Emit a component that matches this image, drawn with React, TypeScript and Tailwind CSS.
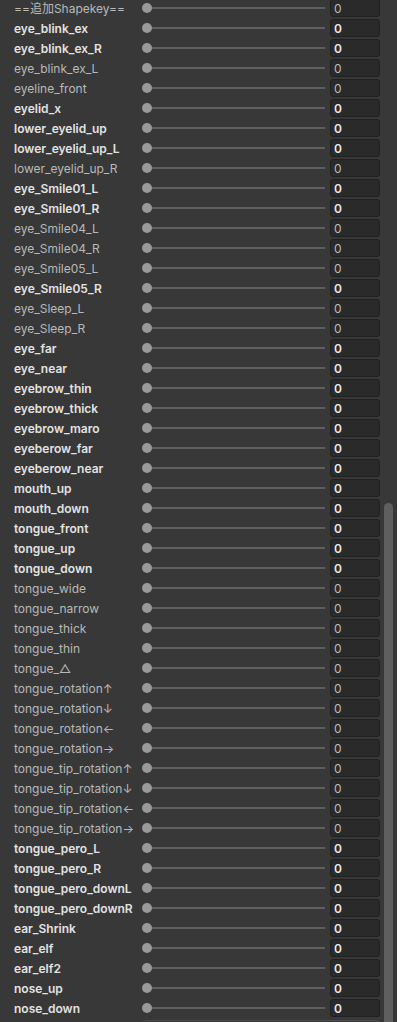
import React from "react";

const rows: [string, boolean][] = [
  ["==追加Shapekey==", false],
  ["eye_blink_ex", true],
  ["eye_blink_ex_R", true],
  ["eye_blink_ex_L", false],
  ["eyeline_front", false],
  ["eyelid_x", true],
  ["lower_eyelid_up", true],
  ["lower_eyelid_up_L", true],
  ["lower_eyelid_up_R", false],
  ["eye_Smile01_L", true],
  ["eye_Smile01_R", true],
  ["eye_Smile04_L", false],
  ["eye_Smile04_R", false],
  ["eye_Smile05_L", false],
  ["eye_Smile05_R", true],
  ["eye_Sleep_L", false],
  ["eye_Sleep_R", false],
  ["eye_far", true],
  ["eye_near", true],
  ["eyebrow_thin", true],
  ["eyebrow_thick", true],
  ["eyebrow_maro", true],
  ["eyeberow_far", true],
  ["eyeberow_near", true],
  ["mouth_up", true],
  ["mouth_down", true],
  ["tongue_front", true],
  ["tongue_up", true],
  ["tongue_down", true],
  ["tongue_wide", false],
  ["tongue_narrow", false],
  ["tongue_thick", false],
  ["tongue_thin", false],
  ["tongue_△", false],
  ["tongue_rotation↑", false],
  ["tongue_rotation↓", false],
  ["tongue_rotation←", false],
  ["tongue_rotation→", false],
  ["tongue_tip_rotation↑", false],
  ["tongue_tip_rotation↓", false],
  ["tongue_tip_rotation←", false],
  ["tongue_tip_rotation→", false],
  ["tongue_pero_L", true],
  ["tongue_pero_R", true],
  ["tongue_pero_downL", true],
  ["tongue_pero_downR", true],
  ["ear_Shrink", true],
  ["ear_elf", true],
  ["ear_elf2", true],
  ["nose_up", true],
  ["nose_down", true],
];

function Row({ label, bold }: { label: string; bold: boolean }) {
  return (
    <div className="flex h-[20px] items-center">
      <div
        className={
          "w-[142px] shrink-0 overflow-hidden whitespace-nowrap pl-[14px] pt-[2px] text-[12px] leading-[20px] " +
          (bold ? "font-semibold text-[#e2e2e2]" : "font-normal text-[#b9b9b9]")
        }
      >
        {label}
      </div>
      <div className="flex w-[183px] shrink-0 items-center">
        <div className="relative z-10 h-[10px] w-[10px] shrink-0 rounded-full bg-[#999999]" />
        <div className="-ml-[5px] h-[2px] flex-1 bg-[#5e5e5e]" />
      </div>
      <div
        className={
          "ml-[5px] flex h-[18px] w-[50px] shrink-0 items-center rounded-[3px] border border-[#212121] bg-[#2a2a2a] pl-[3px] pt-[1px] text-[12px] " +
          (bold ? "font-semibold text-[#e8e8e8]" : "font-normal text-[#bdbdbd]")
        }
      >
        0
      </div>
    </div>
  );
}

export default function App() {
  return (
    <div
      className="flex h-[1022px] w-[397px] overflow-hidden bg-[#383838]"
      style={{ fontFamily: 'Inter, "Noto Sans CJK JP", sans-serif' }}
    >
      <div className="-mt-[2px] flex w-[380px] shrink-0 flex-col">
        {rows.map(([l, b], i) => (
          <Row key={i} label={l} bold={b} />
        ))}
        <div className="ml-[143px] mt-[2px] h-[20px] w-[237px] shrink-0 rounded-[3px] border border-[#4a4a4a]" />
      </div>
      <div className="flex flex-1 justify-center">
        <div className="mt-[503px] h-[600px] w-[9px] rounded-full bg-[#5f5f5f]" />
      </div>
    </div>
  );
}
